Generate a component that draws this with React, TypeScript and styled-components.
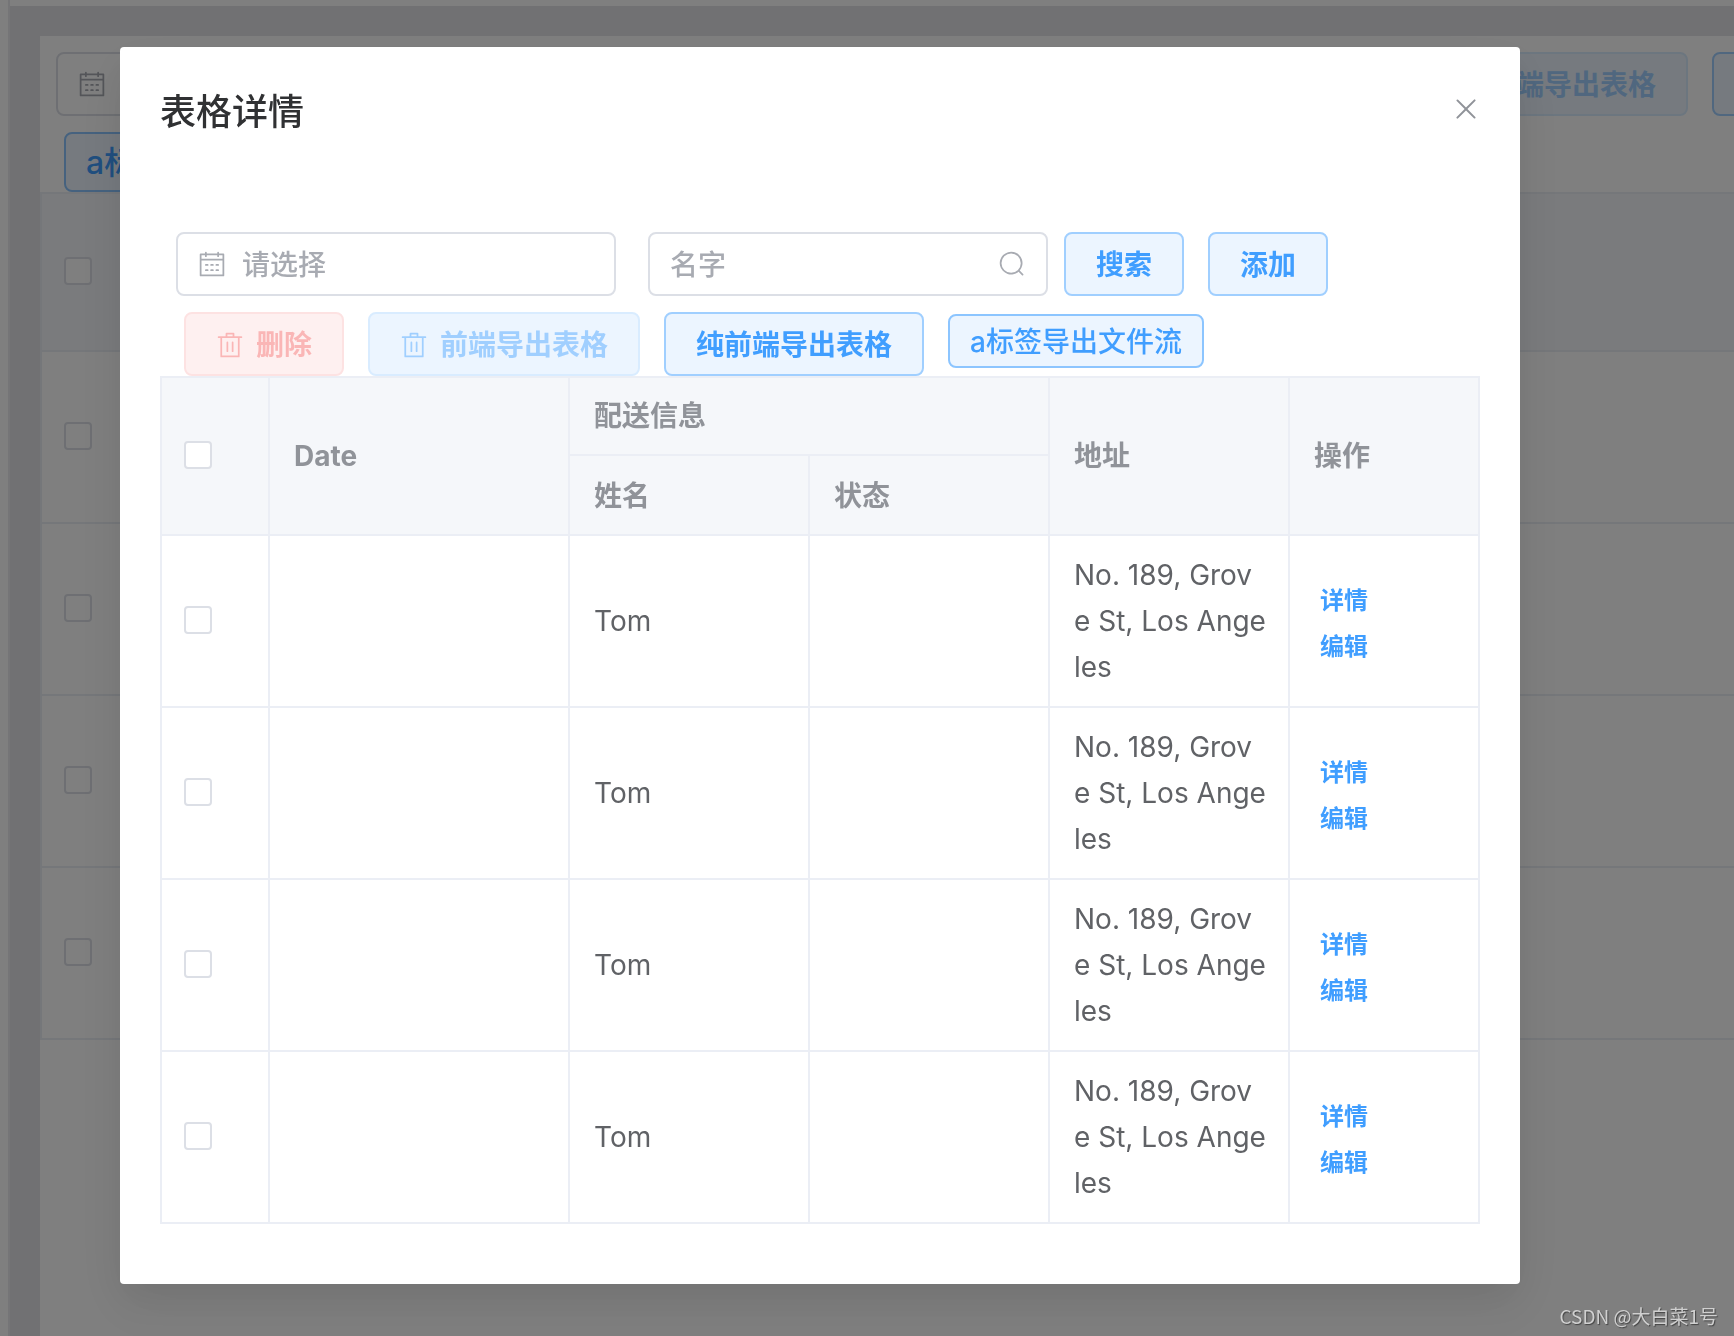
import React from "react";
import styled, { createGlobalStyle, css } from "styled-components";

const GlobalStyle = createGlobalStyle`
  *, *::before, *::after { box-sizing: border-box; }
  body {
    margin: 0;
    overflow: hidden;
    font-family: Inter, "Noto Sans CJK SC", sans-serif;
    font-size: 28px;
    color: #606266;
    background: #fff;
  }
  button, input { font-family: inherit; }
`;

/* ---------- icons ---------- */

const IconSvg = styled.svg<{ $size: number }>`
  display: block;
  flex: none;
  width: ${(p) => p.$size}px;
  height: ${(p) => p.$size}px;
  fill: currentColor;
`;

const ICONS = {
  calendar:
    "M128 384v512h768V192H768v32a32 32 0 1 1-64 0v-32H320v32a32 32 0 0 1-64 0v-32H128v128h768v64H128zm192-256h384V96a32 32 0 1 1 64 0v32h160a32 32 0 0 1 32 32v768a32 32 0 0 1-32 32H96a32 32 0 0 1-32-32V160a32 32 0 0 1 32-32h160V96a32 32 0 0 1 64 0v32zm-32 384h64a32 32 0 0 1 0 64h-64a32 32 0 0 1 0-64zm0 192h64a32 32 0 1 1 0 64h-64a32 32 0 1 1 0-64zm192-192h64a32 32 0 0 1 0 64h-64a32 32 0 0 1 0-64zm0 192h64a32 32 0 1 1 0 64h-64a32 32 0 1 1 0-64zm192-192h64a32 32 0 1 1 0 64h-64a32 32 0 1 1 0-64zm0 192h64a32 32 0 1 1 0 64h-64a32 32 0 1 1 0-64z",
  trash:
    "M160 256H96a32 32 0 0 1 0-64h256V95.936a32 32 0 0 1 32-32h256a32 32 0 0 1 32 32V192h256a32 32 0 1 1 0 64h-64v672a32 32 0 0 1-32 32H192a32 32 0 0 1-32-32zm448-64v-64H416v64zM224 896h576V256H224zm192-128a32 32 0 0 1-32-32V416a32 32 0 0 1 64 0v320a32 32 0 0 1-32 32m192 0a32 32 0 0 1-32-32V416a32 32 0 0 1 64 0v320a32 32 0 0 1-32 32",
  search:
    "m795.904 750.72 124.992 124.928a32 32 0 0 1-45.248 45.248L750.656 795.904a416 416 0 1 1 45.248-45.184zM480 832a352 352 0 1 0 0-704 352 352 0 0 0 0 704",
  close:
    "M764.288 214.592 512 466.88 259.712 214.592a31.936 31.936 0 0 0-45.12 45.12L466.752 512 214.528 764.224a31.936 31.936 0 1 0 45.12 45.184L512 557.184l252.288 252.288a31.936 31.936 0 0 0 45.12-45.12L557.12 512.064l252.288-252.352a31.936 31.936 0 1 0-45.12-45.184z",
};

function Icon({ name, size = 28 }: { name: keyof typeof ICONS; size?: number }) {
  return (
    <IconSvg $size={size} viewBox="0 0 1024 1024" aria-hidden="true">
      <path d={ICONS[name]} />
    </IconSvg>
  );
}

/* ---------- toolbar ---------- */

const Toolbar = styled.div`
  display: flex;
  flex-wrap: wrap;
  align-items: flex-start;
  row-gap: 16px;
  padding-top: 16px;
`;

const Field = styled.label<{ $wide?: boolean }>`
  display: flex;
  align-items: center;
  gap: 16px;
  width: ${(p) => (p.$wide ? 440 : 400)}px;
  height: 64px;
  margin-left: 16px;
  margin-right: ${(p) => (p.$wide ? 16 : 0)}px;
  padding: 0 20px;
  border: 2px solid #dcdfe6;
  border-radius: 8px;
  background: #fff;
  color: #a8abb2;
`;

const FieldInput = styled.input`
  flex: 1;
  min-width: 0;
  padding: 2px 0 0;
  border: 0;
  outline: 0;
  background: transparent;
  font-size: 28px;
  font-weight: 500;
  line-height: 56px;
  color: #606266;
  &::placeholder { color: #a8abb2; opacity: 1; }
`;

type Tone = "primary" | "primaryOff" | "dangerOff";

const tones = {
  primary: css`color: #409eff; background: #ecf5ff; border-color: #a0cfff;`,
  primaryOff: css`color: #a0cfff; background: #ecf5ff; border-color: #d9ecff;`,
  dangerOff: css`color: #fab6b6; background: #fef0f0; border-color: #fde2e2;`,
};

const Button = styled.button<{ $tone: Tone; $first?: boolean }>`
  display: flex;
  align-items: center;
  gap: 12px;
  height: 64px;
  margin: 0 0 0 ${(p) => (p.$first ? 16 : 24)}px;
  padding: 1px 30px 0;
  border: 2px solid;
  border-radius: 8px;
  font-size: 28px;
  font-weight: 700;
  line-height: 28px;
  white-space: nowrap;
  ${(p) => tones[p.$tone]}
`;

const StreamLink = styled.a<{ $large?: boolean }>`
  margin-left: 24px;
  margin-top: ${(p) => (p.$large ? 0 : 2)}px;
  padding: 2px 20px 0;
  border: 2px solid #8cc5ff;
  border-radius: 8px;
  background: #ecf5ff;
  color: #409eff;
  font-size: ${(p) => (p.$large ? 32 : 28)}px;
  font-weight: 500;
  line-height: ${(p) => (p.$large ? 54 : 48)}px;
  text-decoration: none;
  white-space: nowrap;
`;

function ActionBar({ large }: { large?: boolean }) {
  return (
    <Toolbar>
      <Field $wide>
        <Icon name="calendar" />
        <FieldInput placeholder="请选择" aria-label="请选择" />
      </Field>
      <Field>
        <FieldInput placeholder="名字" aria-label="名字" />
        <Icon name="search" />
      </Field>
      <Button type="button" $tone="primary" $first>搜索</Button>
      <Button type="button" $tone="primary">添加</Button>
      <Button type="button" $tone="dangerOff" disabled>
        <Icon name="trash" />
        删除
      </Button>
      <Button type="button" $tone="primaryOff" disabled>
        <Icon name="trash" />
        前端导出表格
      </Button>
      <Button type="button" $tone="primary">纯前端导出表格</Button>
      <StreamLink href="#" $large={large}>a标签导出文件流</StreamLink>
    </Toolbar>
  );
}

/* ---------- table ---------- */

const TableFrame = styled.div`
  border-top: 2px solid #ebeef5;
  border-left: 2px solid #ebeef5;
`;

const Table = styled.table`
  width: 100%;
  table-layout: fixed;
  border-collapse: separate;
  border-spacing: 0;
  line-height: 46px;
  text-align: left;
`;

const Col = styled.col<{ $width?: number }>`
  width: ${(p) => (p.$width ? `${p.$width}px` : "auto")};
`;

const HeadCell = styled.th<{ $top?: boolean }>`
  padding: ${(p) => (p.$top ? 15 : 17)}px 22px 15px 24px;
  border-right: 2px solid #ebeef5;
  border-bottom: 2px solid #ebeef5;
  background: #f5f7fa;
  color: #909399;
  font-weight: 700;
`;

const Cell = styled.td`
  padding: 16px 22px 16px 24px;
  border-right: 2px solid #ebeef5;
  border-bottom: 2px solid #ebeef5;
  background: #fff;
  word-break: break-all;
`;

const Checkbox = styled.input`
  appearance: none;
  display: block;
  width: 28px;
  height: 28px;
  margin: 0 -2px 2px;
  border: 2px solid #dcdfe6;
  border-radius: 4px;
  background: #fff;
`;

const RowActions = styled.div`
  display: flex;
  flex-direction: column;
  align-items: flex-start;
  padding: 6px 0 0 6px;
`;

const TextButton = styled.button`
  padding: 0;
  border: 0;
  background: none;
  color: #409eff;
  font-size: 24px;
  font-weight: 700;
  line-height: 46px;
`;

const orders = [1, 2, 3, 4].map((id) => ({
  id,
  date: "",
  name: "Tom",
  state: "",
  address: "No. 189, Grove St, Los Angeles",
}));

function OrderTable() {
  return (
    <TableFrame>
      <Table>
        <colgroup>
          <Col $width={108} />
          <Col $width={300} />
          <Col $width={240} />
          <Col $width={240} />
          <Col $width={240} />
          <Col />
        </colgroup>
        <thead>
          <tr>
            <HeadCell $top rowSpan={2}>
              <Checkbox type="checkbox" aria-label="全选" />
            </HeadCell>
            <HeadCell $top rowSpan={2}>Date</HeadCell>
            <HeadCell $top colSpan={2}>配送信息</HeadCell>
            <HeadCell $top rowSpan={2}>地址</HeadCell>
            <HeadCell $top rowSpan={2}>操作</HeadCell>
          </tr>
          <tr>
            <HeadCell>姓名</HeadCell>
            <HeadCell>状态</HeadCell>
          </tr>
        </thead>
        <tbody>
          {orders.map((order) => (
            <tr key={order.id}>
              <Cell>
                <Checkbox type="checkbox" aria-label={`选择 ${order.id}`} />
              </Cell>
              <Cell>{order.date}</Cell>
              <Cell>{order.name}</Cell>
              <Cell>{order.state}</Cell>
              <Cell>{order.address}</Cell>
              <Cell>
                <RowActions>
                  <TextButton type="button">详情</TextButton>
                  <TextButton type="button">编辑</TextButton>
                </RowActions>
              </Cell>
            </tr>
          ))}
        </tbody>
      </Table>
    </TableFrame>
  );
}

/* ---------- page behind the dialog ---------- */

const Shell = styled.div`
  height: 100vh;
  overflow: hidden;
  padding-left: 8px;
`;

const Content = styled.div`
  height: 100%;
  min-width: 2180px;
  padding-top: 6px;
  border-left: 2px solid #ebebee;
`;

const Main = styled.main`
  height: 100%;
  padding: 30px 30px 0;
  background: #e3e3e6;
`;

const Panel = styled.section`
  height: 100%;
  background: #fff;
`;

/* ---------- dialog ---------- */

const Overlay = styled.div`
  position: fixed;
  inset: 0;
  padding: 47px 214px 0 120px;
  background: rgba(0, 0, 0, 0.5);
`;

const Dialog = styled.section`
  border-radius: 4px;
  background: #fff;
  box-shadow: 0 24px 64px 8px rgba(0, 0, 0, 0.04), 0 16px 40px rgba(0, 0, 0, 0.08);
`;

const DialogHeader = styled.header`
  display: flex;
  align-items: center;
  justify-content: space-between;
  padding: 40px 38px 19px 40px;
`;

const DialogTitle = styled.h2`
  margin: 0;
  color: #303133;
  font-size: 36px;
  font-weight: 500;
  line-height: 50px;
`;

const CloseButton = styled.button`
  display: flex;
  padding: 0 0 6px;
  border: 0;
  background: none;
  color: #909399;
`;

const DialogBody = styled.div`
  padding: 60px 40px;
`;

const Watermark = styled.div`
  position: fixed;
  right: 16px;
  bottom: 7px;
  color: #d0d0d0;
  font-family: "Noto Sans CJK SC", sans-serif;
  font-size: 19px;
  line-height: 26px;
  text-shadow: 1px 1px 1px #444;
`;

export default function App() {
  return (
    <>
      <GlobalStyle />
      <Shell>
        <Content>
          <Main>
            <Panel>
              <ActionBar large />
              <OrderTable />
            </Panel>
          </Main>
        </Content>
      </Shell>
      <Overlay>
        <Dialog role="dialog" aria-modal="true" aria-labelledby="dialog-title">
          <DialogHeader>
            <DialogTitle id="dialog-title">表格详情</DialogTitle>
            <CloseButton type="button" aria-label="关闭">
              <Icon name="close" size={32} />
            </CloseButton>
          </DialogHeader>
          <DialogBody>
            <ActionBar />
            <OrderTable />
          </DialogBody>
        </Dialog>
      </Overlay>
      <Watermark>CSDN @大白菜1号</Watermark>
    </>
  );
}
